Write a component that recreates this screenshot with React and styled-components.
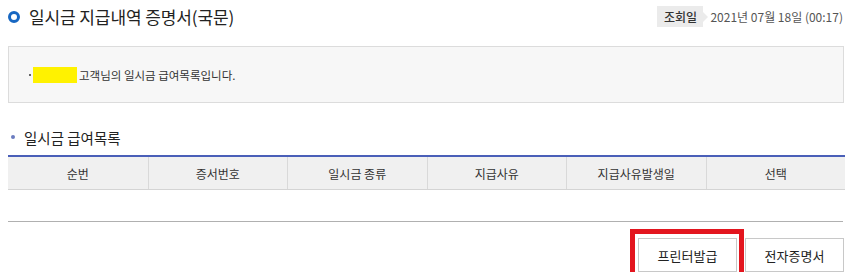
import styled, { createGlobalStyle } from 'styled-components';

const GlobalStyle = createGlobalStyle`
  html, body {
    margin: 0;
    padding: 0;
    background: #fff;
  }
  body {
    font-family: "Noto Sans CJK KR", "Noto Sans", sans-serif;
    color: #333;
  }
`;

const Page = styled.div`
  width: 852px;
  padding: 0 8px;
  box-sizing: border-box;
`;

const Header = styled.div`
  display: flex;
  align-items: center;
  justify-content: space-between;
  height: 33px;
`;

const Title = styled.h1`
  display: flex;
  align-items: center;
  gap: 9px;
  margin: 0;
  font-size: 17px;
  font-weight: 400;
  color: #222;
  letter-spacing: -0.1px;
`;

const Ring = styled.span`
  width: 12px;
  height: 12px;
  box-sizing: border-box;
  border: 3px solid #1767c2;
  border-radius: 50%;
`;

const Inquiry = styled.div`
  display: flex;
  align-items: center;
  gap: 7px;
  padding-right: 1px;
`;

const Badge = styled.span`
  position: relative;
  display: inline-flex;
  align-items: center;
  justify-content: center;
  width: 46px;
  height: 21px;
  background: #ebebeb;
  font-size: 12px;
  font-weight: 500;
  color: #333;

  &::after {
    content: '';
    position: absolute;
    right: -5px;
    top: 50%;
    margin-top: -5px;
    border-top: 5px solid transparent;
    border-bottom: 5px solid transparent;
    border-left: 5px solid #ebebeb;
  }
`;

const DateText = styled.span`
  font-size: 12px;
  color: #555;
`;

const InfoBox = styled.div`
  margin-top: 13px;
  height: 57px;
  box-sizing: border-box;
  border: 1px solid #dcdcdc;
  background: #f7f7f7;
  display: flex;
  align-items: center;
  padding-left: 20px;
  font-size: 11.5px;
  color: #333;
`;

const Dot = styled.span`
  width: 2px;
  height: 2px;
  background: #666;
  margin-right: 2px;
`;

const Masked = styled.span`
  display: inline-block;
  width: 44px;
  height: 16px;
  background: #fff200;
  margin-right: 2px;
`;

const SectionTitle = styled.h2`
  display: flex;
  align-items: center;
  gap: 9px;
  margin: 22px 0 0;
  height: 24px;
  font-size: 14.5px;
  font-weight: 400;
  color: #222;
  padding-left: 3px;
`;

const SectionDot = styled.span`
  width: 4px;
  height: 4px;
  border-radius: 50%;
  background: #6b7cc0;
`;

const Table = styled.div`
  margin-top: 6px;
  width: 837px;
  border-top: 2px solid #4a5fb8;
  border-bottom: 1px solid #d4d4d4;
  display: grid;
  grid-template-columns: repeat(6, 1fr);
  background: #f0f0f0;
`;

const HeadCell = styled.div`
  height: 32px;
  display: flex;
  align-items: center;
  justify-content: center;
  font-size: 12px;
  color: #333;
  border-left: ${({ $first }) => ($first ? 'none' : '1px solid #d9d9d9')};
`;

const Divider = styled.div`
  margin-top: 31px;
  width: 835px;
  height: 1px;
  background: #b0b0b0;
`;

const Actions = styled.div`
  display: flex;
  justify-content: flex-end;
  gap: 8px;
  margin-top: 16px;
`;

const Highlight = styled.div`
  position: relative;
  display: flex;
`;

const RedFrame = styled.span`
  position: absolute;
  left: -8px;
  right: -7px;
  top: -9px;
  bottom: -6px;
  border: 5px solid #e3151e;
  pointer-events: none;
`;

const Button = styled.button`
  width: 99px;
  height: 34px;
  box-sizing: border-box;
  border: 1px solid #c8c8c8;
  background: #fff;
  font-family: inherit;
  font-size: 13px;
  font-weight: 400;
  color: #222;
  cursor: pointer;
`;

const columns = ['순번', '증서번호', '일시금 종류', '지급사유', '지급사유발생일', '선택'];

export default function App() {
  return (
    <Page>
      <GlobalStyle />
      <Header>
        <Title>
          <Ring />
          일시금 지급내역 증명서(국문)
        </Title>
        <Inquiry>
          <Badge>조회일</Badge>
          <DateText>2021년 07월 18일 (00:17)</DateText>
        </Inquiry>
      </Header>
      <InfoBox>
        <Dot />
        <Masked />
        고객님의 일시금 급여목록입니다.
      </InfoBox>
      <SectionTitle>
        <SectionDot />
        일시금 급여목록
      </SectionTitle>
      <Table>
        {columns.map((c, i) => (
          <HeadCell key={c} $first={i === 0}>
            {c}
          </HeadCell>
        ))}
      </Table>
      <Divider />
      <Actions>
        <Highlight>
          <Button>프린터발급</Button>
          <RedFrame />
        </Highlight>
        <Button>전자증명서</Button>
      </Actions>
    </Page>
  );
}
